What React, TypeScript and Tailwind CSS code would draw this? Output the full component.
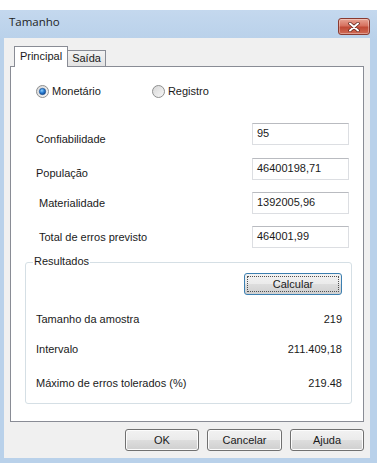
import React from "react";

const btn =
  "flex items-center justify-center rounded-[3px] border border-[#707070] bg-[linear-gradient(#f2f2f2,#ebebeb_48%,#dddddd_52%,#cfcfcf)] text-[11px] text-[#1a1a1a] shadow-[inset_0_0_0_1px_#fcfcfc]";

function Radio({ checked }: { checked?: boolean }) {
  return (
    <svg width="13" height="13" viewBox="0 0 13 13">
      <defs>
        <linearGradient id={checked ? "rg1" : "rg0"} x1="0" y1="0" x2="1" y2="1">
          <stop offset="0" stopColor="#d6d6d6" />
          <stop offset="1" stopColor="#f8f8f8" />
        </linearGradient>
        <radialGradient id="dot" cx="0.4" cy="0.35" r="0.7">
          <stop offset="0" stopColor="#8fd0ff" />
          <stop offset="0.5" stopColor="#2a7fd4" />
          <stop offset="1" stopColor="#0d3f88" />
        </radialGradient>
      </defs>
      <circle cx="6.5" cy="6.5" r="6" fill={`url(#${checked ? "rg1" : "rg0"})`} stroke="#8e8f8f" />
      {checked && <circle cx="6.5" cy="6.5" r="3.2" fill="url(#dot)" stroke="#1d4f8f" strokeWidth="0.6" />}
    </svg>
  );
}

function Field({ label, value, pad, labelTop }: { label: string; value: string; pad: string; labelTop: string }) {
  return (
    <div className={`flex h-[22px] items-start justify-between pr-[14px] ${pad}`}>
      <span className={`text-[11px] leading-[13px] ${labelTop}`}>{label}</span>
      <div className="h-[22px] w-[97px] border border-[#dcdee2] border-t-[#b9bbc0] bg-white pl-[4px] pt-[3px] text-[11px] leading-[13px]">
        {value}
      </div>
    </div>
  );
}

function ResultRow({ label, value, mt }: { label: string; value: string; mt: string }) {
  return (
    <div className={`flex h-[13px] justify-between pl-[10px] pr-[9px] text-[11px] leading-[13px] ${mt}`}>
      <span>{label}</span>
      <span>{value}</span>
    </div>
  );
}

export default function App() {
  return (
    <div className="h-[463px] w-[377px] bg-white pt-[10px] font-['Liberation_Sans',Arial,sans-serif] text-[#1a1a1a]">
      <div className="flex h-[453px] flex-col bg-[linear-gradient(180deg,#c4d8ee,#b9d1ea_30px,#b9d1ea)]">
        <div className="flex h-[28px] items-start justify-between pl-[9px] pr-[7px]">
          <span className="mt-[5px] font-['Open_Sans',sans-serif] text-[11.5px] leading-[14px] text-[#1e1e1e]">Tamanho</span>
          <div className="mt-[8px] flex h-[17px] w-[32px] items-center justify-center rounded-[3px] border border-[#8a3a30] bg-[linear-gradient(#e8a494,#d6715f_45%,#c14a36_55%,#cf6a55)] shadow-[inset_0_0_0_1px_rgba(255,255,255,0.35)]">
            <svg width="12" height="10" viewBox="0 0 12 10">
              <path d="M2 1.5 L10 8.5 M10 1.5 L2 8.5" stroke="#5a2018" strokeWidth="3.4" strokeLinecap="round" />
              <path d="M2 1.5 L10 8.5 M10 1.5 L2 8.5" stroke="#ffffff" strokeWidth="2" strokeLinecap="round" />
            </svg>
          </div>
        </div>
        <div className="ml-[4px] mr-[7px] flex h-[420px] flex-col bg-[#f0f0f0] px-[6px] pt-[8px]">
          <div className="flex h-[20px] items-end pl-[4px]">
            <div className="relative z-10 -mb-px flex h-[21px] w-[54px] items-start justify-center border border-b-0 border-[#898c95] bg-white pt-[3px] text-[11px] leading-[13px]">
              Principal
            </div>
            <div className="flex h-[16px] w-[38px] items-start justify-center border border-b-0 border-l-0 border-[#898c95] bg-[linear-gradient(#f2f2f2,#e3e3e3)] pt-[1px] text-[11px] leading-[13px]">
              Saída
            </div>
          </div>
          <div className="flex h-[356px] flex-col border border-[#898c95] bg-white">
            <div className="mt-[18px] flex h-[13px] items-center pl-[25px] text-[11px] leading-[13px]">
              <Radio checked />
              <span className="ml-[3px]">Monetário</span>
              <span className="ml-[51px]">
                <Radio />
              </span>
              <span className="ml-[3px]">Registro</span>
            </div>
            <div className="mt-[25px]">
              <Field label="Confiabilidade" value="95" pad="pl-[25px]" labelTop="mt-[10px]" />
            </div>
            <div className="mt-[13px]">
              <Field label="População" value="46400198,71" pad="pl-[25px]" labelTop="mt-[9px]" />
            </div>
            <div className="mt-[12px]">
              <Field label="Materialidade" value="1392005,96" pad="pl-[28px]" labelTop="mt-[5px]" />
            </div>
            <div className="mt-[12px]">
              <Field label="Total de erros previsto" value="464001,99" pad="pl-[28px]" labelTop="mt-[5px]" />
            </div>
            <div className="relative ml-[14px] mr-[11px] mt-[14px] h-[142px] rounded-[3px] border border-[#d5dfe5]">
              <span className="absolute left-[7px] top-[-8px] bg-white px-[1px] text-[11px] leading-[13px]">Resultados</span>
              <div className="mr-[9px] mt-[10px] flex justify-end">
                <div className="flex h-[22px] w-[98px] items-center justify-center rounded-[3px] border border-[#3c7fb1] bg-[linear-gradient(#f2f2f2,#ebebeb_48%,#dddddd_52%,#cfcfcf)] p-[2px] text-[11px]">
                  <div className="flex h-full w-full items-center justify-center border border-dotted border-[#505050]">Calcular</div>
                </div>
              </div>
              <ResultRow label="Tamanho da amostra" value="219" mt="mt-[18px]" />
              <ResultRow label="Intervalo" value="211.409,18" mt="mt-[17px]" />
              <ResultRow label="Máximo de erros tolerados (%)" value="219.48" mt="mt-[21px]" />
            </div>
          </div>
          <div className="mt-[7px] flex justify-end gap-[8px] pr-0">
            <div className={`${btn} h-[22px] w-[74px]`}>OK</div>
            <div className={`${btn} h-[22px] w-[75px]`}>Cancelar</div>
            <div className={`${btn} h-[22px] w-[74px]`}>Ajuda</div>
          </div>
        </div>
      </div>
    </div>
  );
}
